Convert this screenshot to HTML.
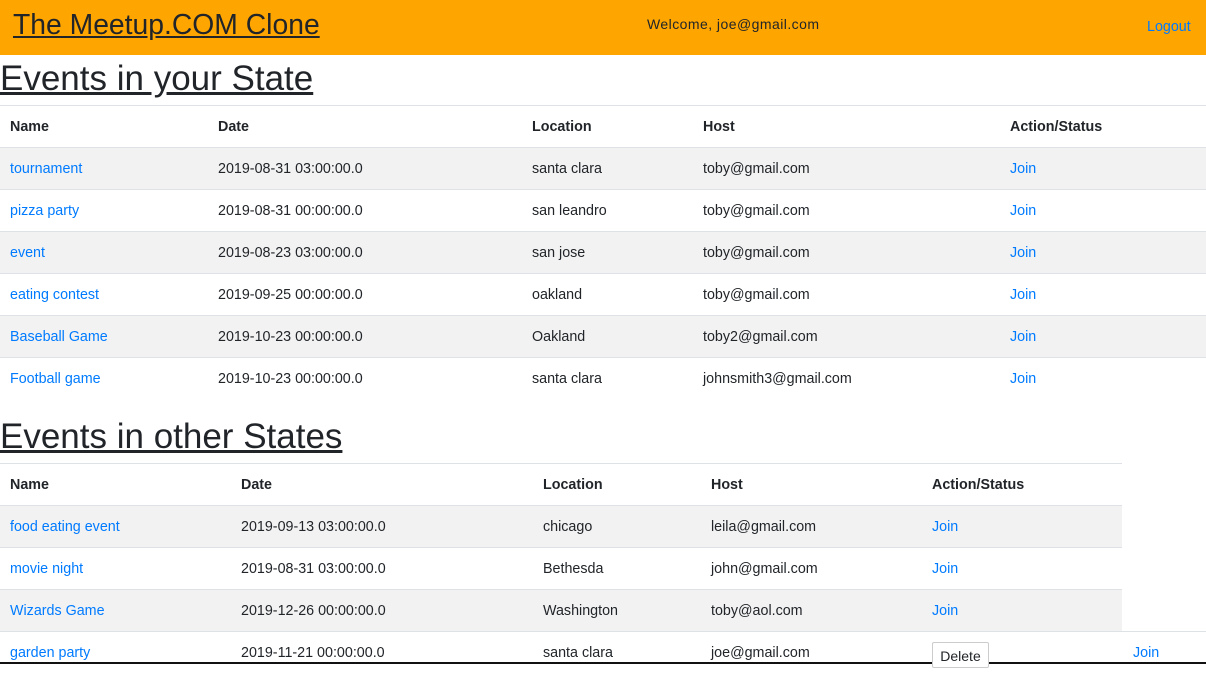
<!DOCTYPE html><html><head><style>
body{margin:0;width:1206px;height:664px;overflow:hidden;position:relative;font-family:"Liberation Sans",sans-serif;color:#212529;background:#fff}
.a{position:absolute;white-space:nowrap}
.hdr{position:absolute;left:0;top:0;width:1206px;height:55px;background:#FFA500}
.t{font-size:14.3px;line-height:42px}
.b{font-weight:bold}
.l{color:#007bff}
.row{position:absolute;left:0;height:41px;border-top:1px solid #dee2e6}
.g{background:#f2f2f2}
h{position:absolute;left:0;font-size:35px;text-decoration:underline;white-space:nowrap}
</style></head><body>
<div class="hdr"></div>
<div class="a" style="left:13px;top:8px;font-size:28.3px;text-decoration:underline">The Meetup.COM Clone</div>
<div class="a" style="left:647px;top:16px;font-size:14px;letter-spacing:0.45px">Welcome, joe@gmail.com</div>
<div class="a l" style="left:1147px;top:19px;font-size:14.3px">Logout</div>
<h style="top:59px">Events in your State</h>
<div class="row" style="top:105px;width:1206px"></div>
<div class="row g" style="top:147px;width:1206px"></div>
<div class="row" style="top:189px;width:1206px"></div>
<div class="row g" style="top:231px;width:1206px"></div>
<div class="row" style="top:273px;width:1206px"></div>
<div class="row g" style="top:315px;width:1206px"></div>
<div class="row" style="top:357px;width:1206px"></div>
<h style="top:417px">Events in other States</h>
<div class="row" style="top:463px;width:1122px"></div>
<div class="row g" style="top:505px;width:1122px"></div>
<div class="row" style="top:547px;width:1122px"></div>
<div class="row g" style="top:589px;width:1122px"></div>
<div class="row" style="top:631px;width:1206px"></div>
<div style="position:absolute;left:0;top:662px;width:1206px;height:2px;background:#111"></div>
<script>
function put(top,cols,vals,cls){vals.forEach((v,i)=>{var d=document.createElement('div');d.className='a t '+(cls[i]||'');d.style.left=cols[i]+'px';d.style.top=top+'px';d.textContent=v;document.body.appendChild(d);});}
var c1=[10,218,532,703,1010];
put(106,c1,['Name','Date','Location','Host','Action/Status'],['b','b','b','b','b']);
var r1=[['tournament','2019-08-31 03:00:00.0','santa clara','toby@gmail.com'],['pizza party','2019-08-31 00:00:00.0','san leandro','toby@gmail.com'],['event','2019-08-23 03:00:00.0','san jose','toby@gmail.com'],['eating contest','2019-09-25 00:00:00.0','oakland','toby@gmail.com'],['Baseball Game','2019-10-23 00:00:00.0','Oakland','toby2@gmail.com'],['Football game','2019-10-23 00:00:00.0','santa clara','johnsmith3@gmail.com']];
r1.forEach((r,i)=>put(148+42*i,c1,r.concat(['Join']),['l','','','','l']));
var c2=[10,241,543,711,932];
put(464,c2,['Name','Date','Location','Host','Action/Status'],['b','b','b','b','b']);
var r2=[['food eating event','2019-09-13 03:00:00.0','chicago','leila@gmail.com','Join'],['movie night','2019-08-31 03:00:00.0','Bethesda','john@gmail.com','Join'],['Wizards Game','2019-12-26 00:00:00.0','Washington','toby@aol.com','Join']];
r2.forEach((r,i)=>put(506+42*i,c2,r,['l','','','','l']));
put(632,c2.slice(0,4).concat([1133]),['garden party','2019-11-21 00:00:00.0','santa clara','joe@gmail.com','Join'],['l','','','','l']);
</script>
<div class="a" style="left:932px;top:642px;width:55px;height:24px;border:1px solid #ccc;border-radius:2px;background:#fff;font-size:14px;text-align:center;line-height:26px">Delete</div>
</body></html>
